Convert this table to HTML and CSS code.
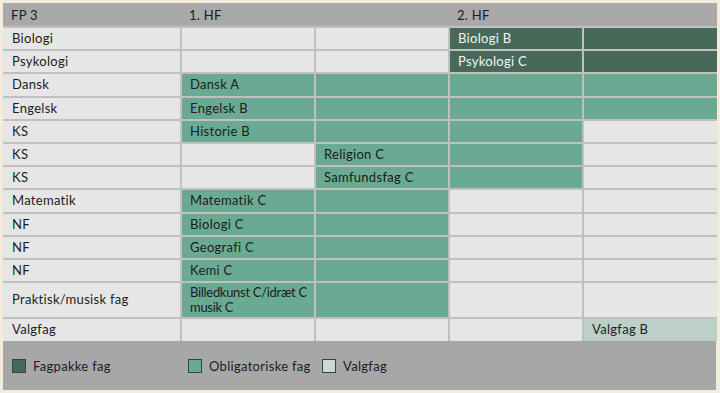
FILE: index.html
```html
<!DOCTYPE html>
<html lang="da">
<head>
<meta charset="utf-8">
<link rel="stylesheet" href="styles.css">
</head>
<body>
<div class="frame">
  <table class="plan">
    <colgroup>
      <col class="c-first"><col class="c"><col class="c"><col class="c"><col class="c">
    </colgroup>
    <thead>
      <tr class="head">
        <th>FP 3</th>
        <th colspan="2">1. HF</th>
        <th colspan="2">2. HF</th>
      </tr>
    </thead>
    <tbody>
      <tr><td class="label">Biologi</td><td></td><td></td><td class="dark">Biologi B</td><td class="dark"></td></tr>
      <tr><td class="label">Psykologi</td><td></td><td></td><td class="dark">Psykologi C</td><td class="dark"></td></tr>
      <tr><td class="label">Dansk</td><td class="green">Dansk A</td><td class="green"></td><td class="green"></td><td class="green"></td></tr>
      <tr><td class="label">Engelsk</td><td class="green">Engelsk B</td><td class="green"></td><td class="green"></td><td class="green"></td></tr>
      <tr><td class="label">KS</td><td class="green">Historie B</td><td class="green"></td><td class="green"></td><td></td></tr>
      <tr><td class="label">KS</td><td></td><td class="green">Religion C</td><td class="green"></td><td></td></tr>
      <tr><td class="label">KS</td><td></td><td class="green">Samfundsfag C</td><td class="green"></td><td></td></tr>
      <tr><td class="label">Matematik</td><td class="green">Matematik C</td><td class="green"></td><td></td><td></td></tr>
      <tr><td class="label">NF</td><td class="green">Biologi C</td><td class="green"></td><td></td><td></td></tr>
      <tr><td class="label">NF</td><td class="green">Geografi C</td><td class="green"></td><td></td><td></td></tr>
      <tr><td class="label">NF</td><td class="green">Kemi C</td><td class="green"></td><td></td><td></td></tr>
      <tr class="tall"><td class="label">Praktisk/musisk fag</td><td class="green tight">Billedkunst C/idræt C<br>musik C</td><td class="green"></td><td></td><td></td></tr>
      <tr class="last"><td class="label">Valgfag</td><td></td><td></td><td></td><td class="light">Valgfag B</td></tr>
    </tbody>
  </table>
  <div class="legend">
    <div class="item"><span class="sw sw-dark"></span>Fagpakke fag</div>
    <div class="item"><span class="sw sw-green"></span>Obligatoriske fag</div>
    <div class="item"><span class="sw sw-light"></span>Valgfag</div>
  </div>
</div>
</body>
</html>
```

FILE: styles.css
```css
html, body {
  margin: 0;
  padding: 0;
  background: #f3ecdc;
}
body {
  font-family: "Lato", "Noto Sans", sans-serif;
  font-size: 13px;
  letter-spacing: 0.3px;
  font-variant-ligatures: none;
  color: #1c1c1c;
}
.frame {
  margin: 3px 0 0 3px;
  width: 713px;
}
.plan {
  width: 713px;
  table-layout: fixed;
  border-collapse: collapse;
}
.c-first { width: 178px; }
.c { width: 134px; }
.plan th, .plan td {
  text-align: left;
  padding: 0 8px;
  height: 23.2px;
  line-height: 15px;
  box-sizing: border-box;
  font-weight: 400;
  white-space: nowrap;
}
.plan td {
  background: #e6e6e6;
  border: 2px solid #c0c0c0;
}
.plan tbody tr:last-child td { border-bottom: none; }
.plan td:first-child { border-left: none; }
.plan td:last-child { border-right: none; }
.plan tr.head th {
  background: #a9a9a9;
  height: 24px;
  padding-top: 1px;
  border: none;
}
.plan td.label { padding-left: 9px; }
.plan td.green { background: #6aaa93; }
.plan td.dark { background: #46695a; color: #f4f4f4; }
.plan td.light { background: #bccfc8; }
.plan td.tight { letter-spacing: -0.3px; }
.plan tr.tall td { height: 35.5px; }
.plan tr.last td { height: 23.5px; }
.legend {
  display: grid;
  grid-template-columns: 178px 134px 134px 134px 133px;
  align-items: center;
  height: 49px;
  background: #a7a7a7;
}
.item {
  display: flex;
  align-items: center;
  gap: 7px;
  padding-left: 9px;
  white-space: nowrap;
}
.item:nth-child(2) { padding-left: 7px; }
.item:nth-child(3) { padding-left: 7px; }
.sw {
  width: 12px;
  height: 12px;
  border: 1px solid #2d4556;
  flex: none;
}
.sw-dark { background: #46695a; }
.sw-green { background: #6aaa93; }
.sw-light { background: #c9d9d3; }
```
